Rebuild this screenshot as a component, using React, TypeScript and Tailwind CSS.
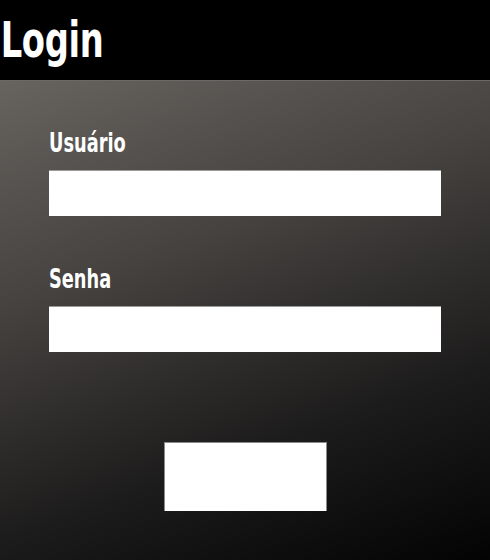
import React from "react";

export default function App() {
  const font = { fontFamily: '"DejaVu Sans Condensed", "DejaVu Sans", sans-serif' };
  return (
    <div className="w-[490px] h-[560px] flex flex-col overflow-hidden" style={font}>
      <header className="h-[80px] bg-black flex items-center shrink-0">
        <h1 className="inline-block origin-left scale-x-[0.75] text-white font-bold text-[50px] leading-none pl-[1px] tracking-[-0.5px]">Login</h1>
      </header>
      <main className="flex-1 border-t border-[#6b6866] bg-[linear-gradient(160deg,#67635f_0%,#45423f_35%,#1d1c1c_70%,#030303_100%)] px-[49px] pt-[49px] flex flex-col">
        <label className="block origin-left scale-x-[0.76] text-white font-bold text-[26px] leading-none">Usuário</label>
        <input className="mt-[14px] h-[46px] w-[392px] bg-white border-t border-[#9a9a9a] outline-none" />
        <label className="block mt-[50px] origin-left scale-x-[0.76] text-white font-bold text-[26px] leading-none">Senha</label>
        <input type="password" className="mt-[14px] h-[46px] w-[392px] bg-white border-t border-[#9a9a9a] outline-none" />
        <div className="flex justify-center pt-[90px]">
          <button className="w-[163px] h-[69px] bg-white border-x border-t border-[#8a8a8a]"></button>
        </div>
      </main>
    </div>
  );
}
